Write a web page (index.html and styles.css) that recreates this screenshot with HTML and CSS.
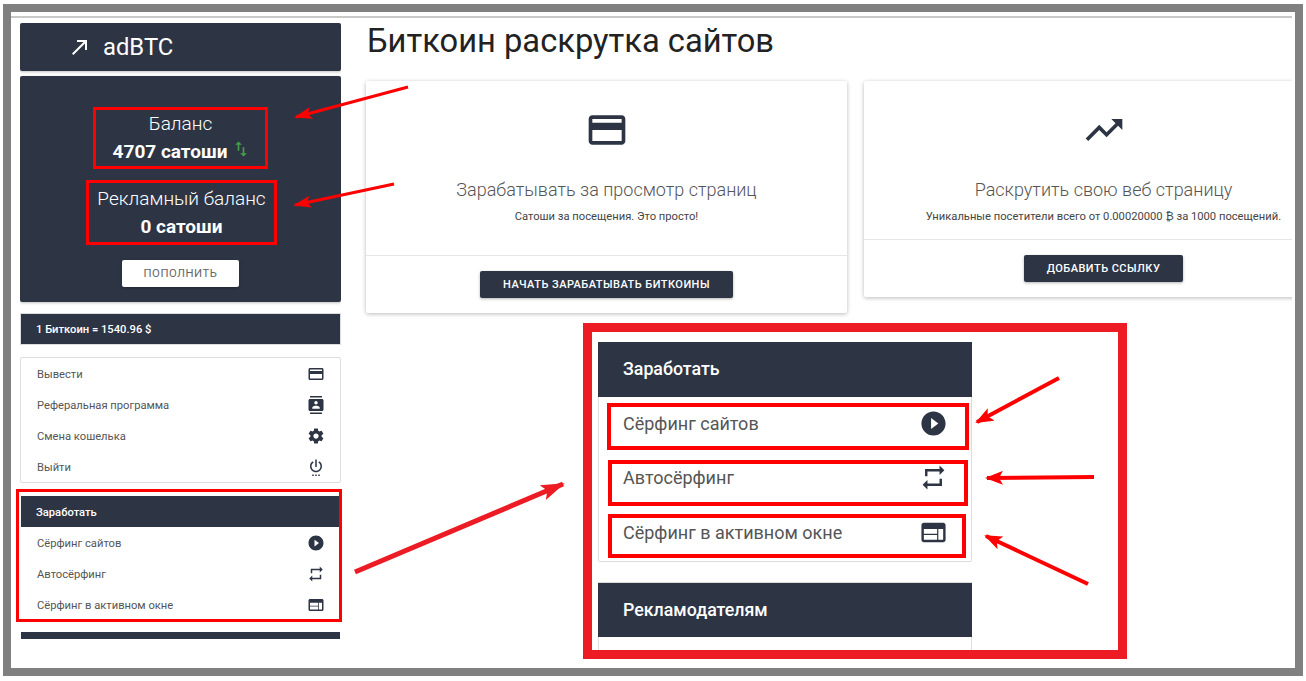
FILE: index.html
```html
<!DOCTYPE html>
<html lang="ru">
  <head>
    <meta charset="utf-8">
    <title>Биткоин раскрутка сайтов</title>
    <link rel="stylesheet" href="styles.css">
  </head>
  <body>
    <!-- набор иконок -->
    <svg class="icon-defs" aria-hidden="true">
      <symbol id="i-card" viewBox="0 0 24 24"><path d="M20 4H4c-1.11 0-1.99.89-1.99 2L2 18c0 1.11.89 2 2 2h16c1.11 0 2-.89 2-2V6c0-1.11-.89-2-2-2zm0 14H4v-6h16v6zm0-10H4V6h16v2z"/></symbol>
      <symbol id="i-trend" viewBox="0 0 24 24"><path d="M16 6l2.29 2.29-4.88 4.88-4-4L2 16.59 3.41 18l6-6 4 4 6.3-6.29L22 12V6z"/></symbol>
      <symbol id="i-contacts" viewBox="0 0 24 24"><path d="M20 0H4v2h16V0zM4 24h16v-2H4v2zM20 4H4c-1.1 0-2 .9-2 2v12c0 1.1.9 2 2 2h16c1.1 0 2-.9 2-2V6c0-1.1-.9-2-2-2zm-8 2.75c1.24 0 2.25 1.01 2.25 2.25s-1.01 2.25-2.25 2.25S9.75 10.24 9.75 9 10.76 6.75 12 6.75zM17 17H7v-1.5c0-1.67 3.33-2.5 5-2.5s5 .83 5 2.5V17z"/></symbol>
      <symbol id="i-gear" viewBox="0 0 24 24"><path d="M19.43 12.98c.04-.32.07-.64.07-.98s-.03-.66-.07-.98l2.11-1.65c.19-.15.24-.42.12-.64l-2-3.46c-.12-.22-.39-.3-.61-.22l-2.49 1c-.52-.4-1.08-.73-1.69-.98l-.38-2.65C14.46 2.18 14.25 2 14 2h-4c-.25 0-.46.18-.49.42l-.38 2.65c-.61.25-1.17.59-1.69.98l-2.49-1c-.23-.09-.49 0-.61.22l-2 3.46c-.13.22-.07.49.12.64l2.11 1.65c-.04.32-.07.65-.07.98s.03.66.07.98l-2.11 1.65c-.19.15-.24.42-.12.64l2 3.46c.12.22.39.3.61.22l2.49-1c.52.4 1.08.73 1.69.98l.38 2.65c.03.24.24.42.49.42h4c.25 0 .46-.18.49-.42l.38-2.65c.61-.25 1.17-.59 1.69-.98l2.49 1c.23.09.49 0 .61-.22l2-3.46c.12-.22.07-.49-.12-.64l-2.11-1.65zM12 15.5c-1.93 0-3.5-1.57-3.5-3.5s1.57-3.5 3.5-3.5 3.5 1.57 3.5 3.5-1.57 3.5-3.5 3.5z"/></symbol>
      <symbol id="i-power" viewBox="0 0 24 24"><path d="M7 24h2v-2H7v2zm4 0h2v-2h-2v2zm2-22h-2v10h2V2zm3.56 2.44l-1.45 1.45C16.84 6.94 18 8.83 18 11c0 3.31-2.69 6-6 6s-6-2.69-6-6c0-2.17 1.16-4.06 2.88-5.12L7.44 4.44C5.36 5.88 4 8.28 4 11c0 4.42 3.58 8 8 8s8-3.58 8-8c0-2.72-1.36-5.12-3.44-6.56zM15 24h2v-2h-2v2z"/></symbol>
      <symbol id="i-play" viewBox="0 0 24 24"><path d="M12 2C6.48 2 2 6.48 2 12s4.48 10 10 10 10-4.48 10-10S17.52 2 12 2zm-2 14.5v-9l6 4.5-6 4.5z"/></symbol>
      <symbol id="i-repeat" viewBox="0 0 24 24"><path d="M7 7h10v3l4-4-4-4v3H5v6h2V7zm10 10H7v-3l-4 4 4 4v-3h12v-6h-2v4z"/></symbol>
      <symbol id="i-web" viewBox="0 0 24 24"><path d="M20 4H4c-1.1 0-1.99.9-1.99 2L2 18c0 1.1.9 2 2 2h16c1.1 0 2-.9 2-2V6c0-1.1-.9-2-2-2zm-5 14H4v-4h11v4zm0-5H4V9h11v4zm5 5h-4V9h4v9z"/></symbol>
      <symbol id="i-made" viewBox="0 0 24 24"><path d="M9 5v2h6.59L4 18.59 5.41 20 17 8.41V15h2V5z"/></symbol>
      <symbol id="i-swap" viewBox="0 0 24 24"><path d="M16 17.01V10h-2v7.01h-3L15 21l4-3.99h-3zM9 3L5 6.99h3V14h2V6.99h3L9 3z"/></symbol>
    </svg>

    <div class="frame">
      <div class="shot">
        <aside class="sidebar">
          <div class="brand">
            <svg class="brand-icon"><use href="#i-made"/></svg>
            <span>adBTC</span>
          </div>

          <div class="balance">
            <div class="stat stat-main">
              <div class="stat-label">Баланс</div>
              <div class="stat-value">4707 сатоши<svg class="swap-icon"><use href="#i-swap"/></svg></div>
            </div>
            <div class="stat stat-ads">
              <div class="stat-label">Рекламный баланс</div>
              <div class="stat-value">0 сатоши</div>
            </div>
            <a class="btn-light">Пополнить</a>
          </div>

          <div class="rate">1 Биткоин = 1540.96 $</div>

          <ul class="menu menu-account">
            <li>Вывести<svg class="menu-icon"><use href="#i-card"/></svg></li>
            <li>Реферальная программа<svg class="menu-icon"><use href="#i-contacts"/></svg></li>
            <li>Смена кошелька<svg class="menu-icon"><use href="#i-gear"/></svg></li>
            <li>Выйти<svg class="menu-icon"><use href="#i-power"/></svg></li>
          </ul>

          <div class="menu-earn">
            <div class="menu-head">Заработать</div>
            <ul class="menu">
              <li>Сёрфинг сайтов<svg class="menu-icon"><use href="#i-play"/></svg></li>
              <li>Автосёрфинг<svg class="menu-icon"><use href="#i-repeat"/></svg></li>
              <li>Сёрфинг в активном окне<svg class="menu-icon"><use href="#i-web"/></svg></li>
            </ul>
          </div>

          <div class="menu-head menu-next"></div>
        </aside>

        <main class="content">
          <h1>Биткоин раскрутка сайтов</h1>
          <div class="cards">
            <section class="card">
              <div class="card-body card-body-tall">
                <svg class="card-icon"><use href="#i-card"/></svg>
                <h2>Зарабатывать за просмотр страниц</h2>
                <p>Сатоши за посещения. Это просто!</p>
              </div>
              <div class="card-foot"><a class="btn-dark">Начать зарабатывать биткоины</a></div>
            </section>
            <section class="card">
              <div class="card-body">
                <svg class="card-icon"><use href="#i-trend"/></svg>
                <h2>Раскрутить свою веб страницу</h2>
                <p>Уникальные посетители всего от 0.00020000 ₿ за 1000 посещений.</p>
              </div>
              <div class="card-foot"><a class="btn-dark">Добавить ссылку</a></div>
            </section>
          </div>
        </main>

        <!-- увеличенный фрагмент меню поверх страницы -->
        <div class="zoom-box">
          <div class="zoom-menu">
            <div class="zoom-head">Заработать</div>
            <ul class="zoom-list">
              <li>Сёрфинг сайтов<svg class="zoom-icon"><use href="#i-play"/></svg></li>
              <li>Автосёрфинг<svg class="zoom-icon"><use href="#i-repeat"/></svg></li>
              <li>Сёрфинг в активном окне<svg class="zoom-icon"><use href="#i-web"/></svg></li>
            </ul>
            <div class="zoom-head zoom-head-next">Рекламодателям</div>
            <div class="zoom-rest"></div>
          </div>
        </div>
      </div>
    </div>

    <!-- стрелки и рамки разметки -->
    <svg class="marks" viewBox="0 0 1306 681" aria-hidden="true">
      <defs>
        <marker id="head" viewBox="0 0 18 12" refX="16" refY="6" markerWidth="18" markerHeight="12" markerUnits="userSpaceOnUse" orient="auto">
          <path class="head-red" d="M0 0L18 6L0 12L4 6Z"/>
        </marker>
        <marker id="head-mid" viewBox="0 0 18 14" refX="16" refY="7" markerWidth="18" markerHeight="14" markerUnits="userSpaceOnUse" orient="auto">
          <path class="head-red" d="M0 0L18 7L0 14L4 7Z"/>
        </marker>
        <marker id="head-big" viewBox="0 0 24 16" refX="22" refY="8" markerWidth="24" markerHeight="16" markerUnits="userSpaceOnUse" orient="auto">
          <path class="head-dark" d="M0 0L24 8L0 16L5 8Z"/>
        </marker>
      </defs>
      <line class="arrow" x1="408" y1="87" x2="296" y2="117" marker-end="url(#head)"/>
      <line class="arrow" x1="394" y1="184" x2="295" y2="205" marker-end="url(#head)"/>
      <line class="arrow arrow-big" x1="355" y1="572" x2="563" y2="484" marker-end="url(#head-big)"/>
      <line class="arrow arrow-mid" x1="1059" y1="378" x2="977" y2="422" marker-end="url(#head-mid)"/>
      <line class="arrow arrow-mid" x1="1094" y1="477" x2="987" y2="478" marker-end="url(#head-mid)"/>
      <line class="arrow arrow-mid" x1="1088" y1="584" x2="986" y2="536" marker-end="url(#head-mid)"/>
      <rect class="box" x="609" y="405" width="358" height="43"/>
      <rect class="box" x="610" y="462" width="356" height="42"/>
      <rect class="box" x="610" y="516" width="354" height="40"/>
      <rect class="box box-thin" x="17.5" y="490.5" width="323" height="130"/>
    </svg>
  </body>
</html>
```

FILE: styles.css
```css
body {
  margin: 0;
  background-color: #fff;
  color: #2d3545;
  font-family: Roboto, 'Liberation Sans', sans-serif;
}

ul {
  list-style: none;
  margin: 0;
  padding: 0;
}

.icon-defs {
  display: none;
}

.frame {
  box-sizing: border-box;
  height: 672px;
  margin: 4px 3px 5px;
  padding-right: 3px;
  border: 8px solid #808080;
  background-color: #fff;
}

.shot {
  position: relative;
  display: flex;
  gap: 25px;
  height: 652px;
  margin-top: 4px;
  padding: 5px 0 0 9px;
  border-top: 2px solid #c8c8c8;
  box-sizing: border-box;
  overflow: hidden;
}

/* левая колонка */
.sidebar {
  flex: none;
  width: 321px;
  height: 616px;
  overflow: hidden;
}

.brand {
  display: flex;
  align-items: center;
  gap: 11px;
  height: 48px;
  padding-left: 48px;
  background-color: #2d3545;
  color: #fff;
  font-size: 23.8px;
  box-shadow: 0 1px 3px rgba(0, 0, 0, 0.25);
  border-radius: 2px;
}

.brand-icon {
  width: 24px;
  height: 24px;
  fill: #fff;
}

.balance {
  display: flex;
  flex-direction: column;
  align-items: center;
  box-sizing: border-box;
  height: 226px;
  margin-top: 5px;
  padding-top: 31px;
  background-color: #2d3545;
  color: #fff;
  border-radius: 2px;
  box-shadow: 0 1px 3px rgba(0, 0, 0, 0.25);
}

.stat {
  box-sizing: border-box;
  padding-top: 1px;
  border: 3px solid #f00;
  text-align: center;
}

.stat-main {
  width: 175px;
  height: 62px;
}

.stat-ads {
  width: 191px;
  height: 65px;
  margin: 11px 0 0 2px;
}

.stat-label {
  font-size: 19px;
  font-weight: 300;
  line-height: 26px;
}

.stat-value {
  display: flex;
  justify-content: center;
  font-size: 19px;
  font-weight: 700;
  line-height: 30px;
}

.stat-ads .stat-label {
  margin-top: 2px;
}

.swap-icon {
  width: 20px;
  height: 20px;
  margin: 2px -3px 0 4px;
  fill: #43a047;
}

.btn-light {
  width: 117px;
  height: 27px;
  margin-top: 15px;
  background-color: #fff;
  color: #666;
  font-size: 11.3px;
  line-height: 27px;
  letter-spacing: 0.5px;
  text-align: center;
  text-transform: uppercase;
  border-radius: 2px;
  box-shadow: 0 1px 3px rgba(0, 0, 0, 0.3);
}

.rate {
  box-sizing: border-box;
  height: 32px;
  margin-top: 11px;
  padding-left: 15px;
  background-color: #2d3545;
  border: 1px solid #ddd;
  color: #fff;
  font-size: 11.2px;
  font-weight: 500;
  line-height: 31px;
}

.menu li {
  display: flex;
  align-items: center;
  justify-content: space-between;
  box-sizing: border-box;
  height: 31px;
  padding: 2px 15px 0 16px;
  color: #555;
  font-size: 11.2px;
}

.menu-account {
  margin-top: 12px;
  border: 1px solid #ddd;
  border-radius: 2px;
}

.menu-icon {
  width: 18px;
  height: 18px;
  margin-bottom: 2px;
  fill: #2d3545;
}

.menu-earn {
  margin: 13px 1px 0;
}

.menu-head {
  height: 31px;
  padding-left: 15px;
  background-color: #2d3545;
  color: #fff;
  font-size: 11.2px;
  font-weight: 500;
  line-height: 33px;
}

.menu-next {
  margin: 12px 1px 0;
}

/* основная часть */
.content {
  flex: none;
  width: 1000px;
}

h1 {
  margin: 0;
  height: 58px;
  padding-left: 1px;
  color: #222;
  font-size: 32.7px;
  font-weight: 400;
  line-height: 37px;
}

.cards {
  display: flex;
  align-items: flex-start;
  gap: 17px;
}

.card {
  flex: none;
  width: 481px;
  background-color: #fff;
  text-align: center;
  border-radius: 2px;
  box-shadow: 0 1px 4px rgba(0, 0, 0, 0.28);
}

.card + .card {
  width: 479px;
}

.card-body {
  box-sizing: border-box;
  height: 159px;
  padding-top: 27px;
  border-bottom: 1px solid #e6e6e6;
}

.card-body-tall {
  height: 175px;
}

.card-icon {
  display: block;
  width: 44px;
  height: 44px;
  margin: 0 auto;
  fill: #2d3545;
}

.card h2 {
  margin: 25px 0 0;
  color: #555;
  font-size: 18px;
  font-weight: 300;
  line-height: 26px;
}

.card p {
  margin: 6px 0 0;
  color: #444;
  font-size: 11.2px;
  line-height: 16px;
}

.card-foot {
  padding: 15px 0;
}

.btn-dark {
  display: inline-block;
  height: 27px;
  padding: 0 23px;
  background-color: #2d3545;
  color: #fff;
  font-size: 11px;
  font-weight: 500;
  line-height: 27px;
  letter-spacing: 0.47px;
  text-transform: uppercase;
  border-radius: 2px;
  box-shadow: 0 1px 3px rgba(0, 0, 0, 0.3);
}

/* увеличенный фрагмент */
.zoom-box {
  position: absolute;
  left: 572px;
  top: 305px;
  box-sizing: border-box;
  width: 544px;
  height: 336px;
  padding: 10px 0 0 6px;
  border: 9px solid #ed1c24;
  background-color: #fff;
  overflow: hidden;
}

.zoom-menu {
  width: 374px;
}

.zoom-head {
  height: 55px;
  padding-left: 25px;
  background-color: #2d3545;
  color: #fff;
  font-size: 17.8px;
  font-weight: 500;
  line-height: 54px;
}

.zoom-head-next {
  height: 54px;
  margin-top: 21px;
  box-shadow: 0 -1px 0 #ddd;
}

.zoom-list {
  border: 1px solid #ddd;
  border-top: none;
  border-radius: 0 0 2px 2px;
}

.zoom-list li {
  display: flex;
  align-items: center;
  justify-content: space-between;
  box-sizing: border-box;
  height: 54.67px;
  padding: 0 23px 2px 24px;
  color: #555;
  font-size: 18px;
}

.zoom-icon {
  width: 29px;
  height: 29px;
  fill: #2d3545;
}

.zoom-rest {
  height: 20px;
  border: 1px solid #ddd;
  border-width: 0 1px;
}

/* разметка поверх страницы */
.marks {
  position: absolute;
  top: 0;
  left: 0;
  width: 1306px;
  height: 681px;
  pointer-events: none;
}

.arrow {
  stroke: #f00;
  stroke-width: 3;
}

.arrow-mid {
  stroke-width: 4;
}

.arrow-big {
  stroke: #ed1c24;
  stroke-width: 5;
}

.head-red {
  fill: #f00;
}

.head-dark {
  fill: #ed1c24;
}

.box {
  fill: none;
  stroke: #f00;
  stroke-width: 4;
}

.box-thin {
  stroke-width: 3;
}
```
